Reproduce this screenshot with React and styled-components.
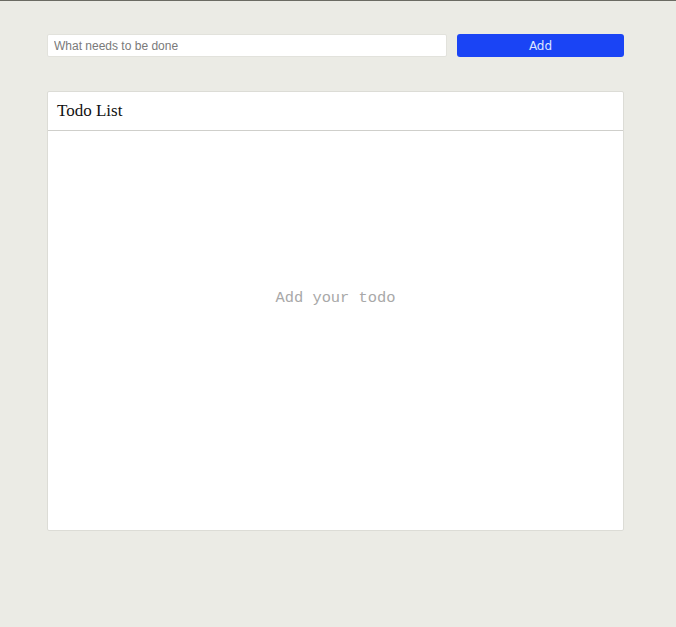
import React, { useState } from 'react';
import styled, { createGlobalStyle } from 'styled-components';

const GlobalStyle = createGlobalStyle`
  html, body {
    margin: 0;
    padding: 0;
    background: #ebebe5;
  }
  body {
    border-top: 1px solid #6b6b63;
    min-height: 626px;
  }
`;

const App = () => {
  const [value, setValue] = useState('');
  const [todos] = useState([]);

  return (
    <>
      <GlobalStyle />
      <Page>
        <Form onSubmit={(e) => e.preventDefault()}>
          <Input
            placeholder="What needs to be done"
            value={value}
            onChange={(e) => setValue(e.target.value)}
          />
          <AddButton type="submit">Add</AddButton>
        </Form>
        <Card>
          <CardHeader>Todo List</CardHeader>
          <CardBody>
            {todos.length === 0 && <Empty>Add your todo</Empty>}
          </CardBody>
        </Card>
      </Page>
    </>
  );
};

const Page = styled.div`
  width: 577px;
  padding: 33px 0 0 47px;
`;

const Form = styled.form`
  display: flex;
  gap: 10px;
  height: 23px;
`;

const Input = styled.input`
  flex: 0 0 400px;
  box-sizing: border-box;
  height: 23px;
  margin: 0;
  padding: 0 6px;
  border: 1px solid #e2e2dc;
  border-radius: 2px;
  background: #fff;
  font-family: 'Liberation Sans', Arial, sans-serif;
  font-size: 12px;
  color: #333;
  outline: none;

  &::placeholder {
    color: #7a7a7a;
  }
`;

const AddButton = styled.button`
  flex: 1;
  height: 23px;
  margin: 0;
  border: none;
  border-radius: 3px;
  background: #1a44f5;
  color: #dfe4ff;
  font-family: 'DejaVu Sans', sans-serif;
  font-size: 12px;
  cursor: pointer;
`;

const Card = styled.div`
  margin-top: 34px;
  height: 440px;
  display: flex;
  flex-direction: column;
  box-sizing: border-box;
  background: #fff;
  border: 1px solid #dcdcd6;
  border-radius: 2px;
`;

const CardHeader = styled.div`
  height: 38px;
  display: flex;
  align-items: center;
  padding: 0 9px;
  border-bottom: 1px solid #cfcfcb;
  font-family: 'Liberation Serif', 'Times New Roman', serif;
  font-size: 17px;
  color: #111;
`;

const CardBody = styled.div`
  flex: 1;
  padding-top: 159px;
  text-align: center;
`;

const Empty = styled.p`
  margin: 0;
  font-family: 'Liberation Mono', 'Courier New', monospace;
  font-size: 15.4px;
  line-height: 17px;
  color: #a8a8a8;
`;

export default App;
